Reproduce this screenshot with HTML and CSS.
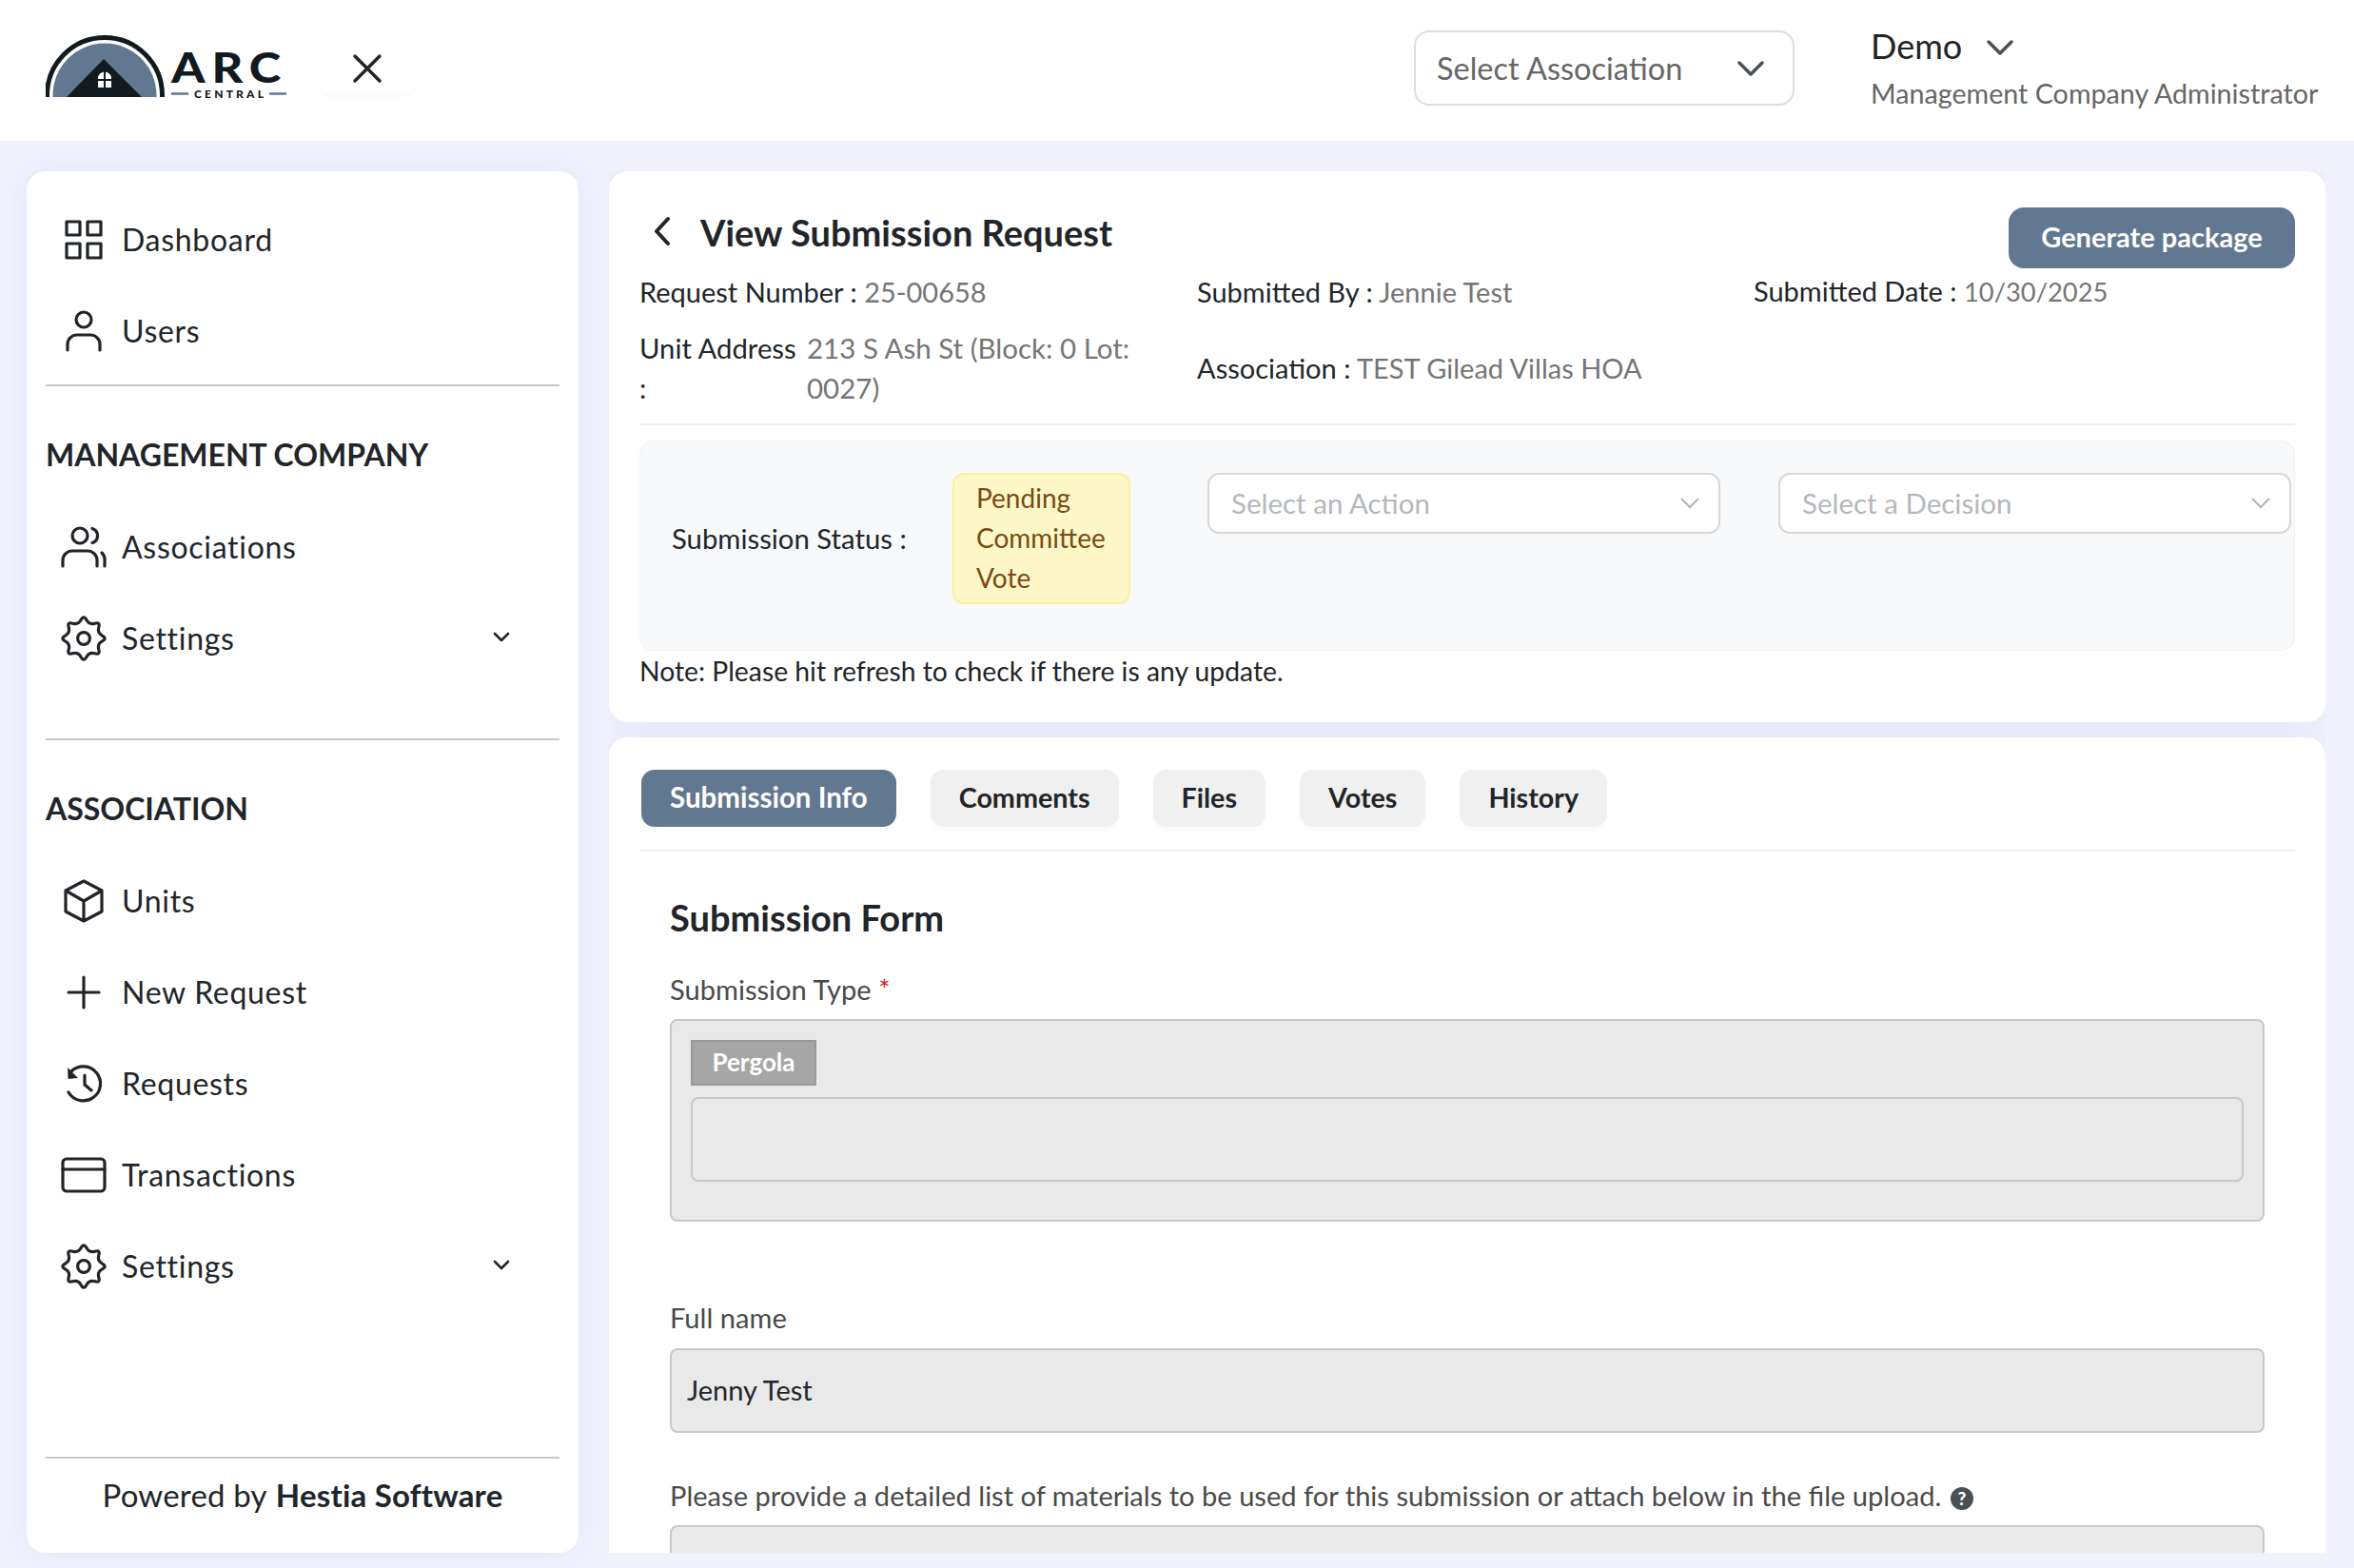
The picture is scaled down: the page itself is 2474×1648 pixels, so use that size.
FILE: index.html
```html
<!DOCTYPE html>
<html lang="en">
<head>
  <meta charset="UTF-8">
  <title>View Submission Request</title>
  <link rel="stylesheet" href="styles.css">
</head>
<body>
  <!-- Top bar -->
  <header class="topbar">
    <svg class="logo" width="260" height="76" viewBox="48 32 260 76">
      <defs><clipPath id="dome"><rect x="40" y="30" width="140" height="72"/></clipPath></defs>
      <g clip-path="url(#dome)">
        <circle cx="110" cy="100" r="60.5" fill="none" stroke="#111a1e" stroke-width="5"/>
        <circle cx="110" cy="100" r="54.5" fill="#627891"/>
        <path d="M109 62 L150 103 L69 103Z" fill="#111a1e"/>
      </g>
      <path d="M103 92V82a7 6.5 0 0 1 14 0V92Z" fill="#fff"/>
      <path d="M110 74V93M102 84H118" stroke="#111a1e" stroke-width="2"/>
      <text class="logo-arc" x="180" y="87" textLength="122" lengthAdjust="spacingAndGlyphs">ARC</text>
      <path d="M180 98.500H198M283 98.500H301" stroke="#627891" stroke-width="2.500"/>
      <text class="logo-central" x="204" y="103" textLength="73" lengthAdjust="spacing">CENTRAL</text>
    </svg>
    <button class="close-btn" type="button" aria-label="Close menu">
      <svg width="32" height="32" viewBox="0 0 32 32"><path d="M3 3L29 29M29 3L3 29" fill="none" stroke="#212529" stroke-width="3.500" stroke-linecap="round"/></svg>
    </button>
    <div class="assoc-select">
      <span>Select Association</span>
      <svg width="28" height="18" viewBox="0 0 28 18"><path d="M2 3L14 15L26 3" fill="none" stroke="#495057" stroke-width="3.500" stroke-linecap="round" stroke-linejoin="round"/></svg>
    </div>
    <div class="user">
      <div class="user-name">
        <span>Demo</span>
        <svg class="user-caret" width="28" height="18" viewBox="0 0 28 18"><path d="M2 3L14 15L26 3" fill="none" stroke="#495057" stroke-width="3.500" stroke-linecap="round" stroke-linejoin="round"/></svg>
      </div>
      <div class="user-role">Management Company Administrator</div>
    </div>
  </header>

  <div class="layout">
    <!-- Sidebar -->
    <aside class="sidebar">
      <a class="nav-item">
        <svg class="nav-icon" viewBox="0 0 24 24"><path d="M3 2.500H10V9.500H3ZM14 2.500H21V9.500H14ZM3 14H10V21.500H3ZM14 14H21V21.500H14Z"/></svg>
        Dashboard
      </a>
      <a class="nav-item">
        <svg class="nav-icon" viewBox="0 0 24 24"><circle cx="12" cy="6" r="4"/><path d="M3.500 22V19a5 5 0 0 1 5-5h7a5 5 0 0 1 5 5v3"/></svg>
        Users
      </a>
      <hr class="side-rule">
      <h2 class="side-title first">MANAGEMENT COMPANY</h2>
      <a class="nav-item">
        <svg class="nav-icon" viewBox="0 0 24 24"><circle cx="10" cy="6" r="4"/><path d="M16.500 2.200a4 4 0 0 1 0 7.600M1 22V19a5 5 0 0 1 5-5h8a5 5 0 0 1 5 5v3M21.500 15a5 5 0 0 1 1.500 4v3"/></svg>
        Associations
      </a>
      <a class="nav-item">
        <svg class="nav-icon" viewBox="0 0 24 24"><path d="M10.545 2.290Q12 -.4 13.455 2.290Q14.910 4.980 17.840 4.105Q20.770 3.230 19.895 6.160Q19.020 9.090 21.710 10.545Q24.400 12 21.710 13.455Q19.020 14.910 19.895 17.840Q20.770 20.770 17.840 19.895Q14.910 19.020 13.455 21.710Q12 24.400 10.545 21.710Q9.090 19.020 6.160 19.895Q3.230 20.770 4.105 17.840Q4.980 14.910 2.290 13.455Q-.4 12 2.290 10.545Q4.980 9.090 4.105 6.160Q3.230 3.230 6.160 4.105Q9.090 4.980 10.545 2.290Z"/><circle cx="12" cy="12" r="3.200"/></svg>
        Settings
        <svg class="nav-caret" viewBox="0 0 18 12"><path d="M2 2L9 9L16 2"/></svg>
      </a>
      <hr class="side-rule second">
      <h2 class="side-title">ASSOCIATION</h2>
      <a class="nav-item">
        <svg class="nav-icon" viewBox="0 0 24 24"><path d="M12 1.500L21.500 6.500V17.500L12 22.500L2.500 17.500V6.500ZM2.500 6.500L12 12L21.500 6.500M12 12V22.500"/></svg>
        Units
      </a>
      <a class="nav-item">
        <svg class="nav-icon" viewBox="0 0 24 24"><path d="M12 4V20M4 12H20"/></svg>
        New Request
      </a>
      <a class="nav-item">
        <svg class="nav-icon" viewBox="0 0 24 24"><path d="M5.500 5.500A9 9 0 1 1 4 16.500M12.500 7.500V12.500L16 15.500"/><path class="solid" d="M3.500 3.500L3.800 9.500L9 9Z"/></svg>
        Requests
      </a>
      <a class="nav-item">
        <svg class="nav-icon" viewBox="0 0 24 24"><rect x="1" y="3.500" width="22" height="17" rx="2"/><path d="M1 9H23"/></svg>
        Transactions
      </a>
      <a class="nav-item">
        <svg class="nav-icon" viewBox="0 0 24 24"><path d="M10.545 2.290Q12 -.4 13.455 2.290Q14.910 4.980 17.840 4.105Q20.770 3.230 19.895 6.160Q19.020 9.090 21.710 10.545Q24.400 12 21.710 13.455Q19.020 14.910 19.895 17.840Q20.770 20.770 17.840 19.895Q14.910 19.020 13.455 21.710Q12 24.400 10.545 21.710Q9.090 19.020 6.160 19.895Q3.230 20.770 4.105 17.840Q4.980 14.910 2.290 13.455Q-.4 12 2.290 10.545Q4.980 9.090 4.105 6.160Q3.230 3.230 6.160 4.105Q9.090 4.980 10.545 2.290Z"/><circle cx="12" cy="12" r="3.200"/></svg>
        Settings
        <svg class="nav-caret" viewBox="0 0 18 12"><path d="M2 2L9 9L16 2"/></svg>
      </a>
      <div class="side-footer">Powered by <b>Hestia Software</b></div>
    </aside>

    <main class="content">
      <!-- Request summary -->
      <section class="card summary">
        <div class="title-row">
          <h1 class="page-title">
            <svg class="back-icon" width="20" height="32" viewBox="0 0 20 32"><path d="M16 3L4 16L16 29" fill="none" stroke="#212529" stroke-width="4" stroke-linecap="round" stroke-linejoin="round"/></svg>
            View Submission Request
          </h1>
          <button class="btn-package" type="button">Generate package</button>
        </div>
        <div class="info-grid">
          <div>Request Number : <span class="val">25-00658</span></div>
          <div>Submitted By : <span class="val">Jennie Test</span></div>
          <div class="date">Submitted Date : <span class="val">10/30/2025</span></div>
          <div class="unit">
            <div class="unit-label">Unit Address :</div>
            <div class="val unit-val">213 S Ash St (Block: 0 Lot: 0027)</div>
          </div>
          <div>Association : <span class="val">TEST Gilead Villas HOA</span></div>
        </div>
        <div class="status-panel">
          <div class="status-label">Submission Status :</div>
          <div class="status-badge">Pending Committee Vote</div>
          <div class="fake-select action">
            <span>Select an Action</span>
            <svg width="20" height="12" viewBox="0 0 20 12"><path d="M1 1L10 10L19 1" fill="none" stroke="#adb5bd" stroke-width="2"/></svg>
          </div>
          <div class="fake-select decision">
            <span>Select a Decision</span>
            <svg width="20" height="12" viewBox="0 0 20 12"><path d="M1 1L10 10L19 1" fill="none" stroke="#adb5bd" stroke-width="2"/></svg>
          </div>
        </div>
        <p class="note">Note: Please hit refresh to check if there is any update.</p>
      </section>

      <!-- Tabs and form -->
      <section class="card details">
        <div class="tabs">
          <button class="tab active" type="button">Submission Info</button>
          <button class="tab" type="button">Comments</button>
          <button class="tab" type="button">Files</button>
          <button class="tab" type="button">Votes</button>
          <button class="tab" type="button">History</button>
        </div>
        <form class="form">
          <h2 class="form-title">Submission Form</h2>
          <label class="field-label">Submission Type <span class="req">*</span></label>
          <div class="multi-box">
            <span class="tag">Pergola</span>
            <div class="multi-input"></div>
          </div>
          <label class="field-label full-name">Full name</label>
          <div class="text-box">Jenny Test</div>
          <label class="field-label materials">
            Please provide a detailed list of materials to be used for this submission or attach below in the file upload.
            <span class="help">?</span>
          </label>
          <div class="text-box"></div>
        </form>
      </section>
    </main>
  </div>
</body>
</html>
```

FILE: styles.css
```css
* {
  margin: 0;
  padding: 0;
  box-sizing: border-box;
}

body {
  width: 2474px;
  height: 1648px;
  overflow: hidden;
  background-color: #f0f1fd;
  color: #212529;
  font-family: Lato, "Open Sans", sans-serif;
  font-size: 28px;
  line-height: 42px;
}

button {
  border: none;
  font-family: inherit;
}

/* Top bar */
.topbar {
  height: 148px;
  background-color: #fff;
  display: flex;
  align-items: center;
  padding-left: 48px;
}

.logo {
  flex: none;
  margin-top: -8px;
}

.logo-arc {
  font-family: Lato, sans-serif;
  font-weight: 900;
  font-size: 44px;
  letter-spacing: 6px;
  fill: #111a1e;
}

.logo-central {
  font-family: Lato, sans-serif;
  font-weight: 900;
  font-size: 12px;
  fill: #111a1e;
}

.close-btn {
  width: 108px;
  height: 64px;
  margin: -14px 0 0 24px;
  padding-top: 10px;
  background-color: #fff;
  border-radius: 0 0 16px 16px;
  box-shadow: 0 3px 3px rgba(0, 0, 0, 0.02);
  display: flex;
  align-items: center;
  justify-content: center;
}

.assoc-select {
  width: 400px;
  height: 79px;
  margin-left: auto;
  margin-bottom: 5px;
  padding: 0 30px 0 22px;
  border: 2px solid #dcdcdc;
  border-radius: 16px;
  display: flex;
  align-items: center;
  justify-content: space-between;
  font-size: 32.500px;
  color: #666;
}

.user {
  width: 508px;
  margin-left: 80px;
}

.user-name {
  display: flex;
  align-items: center;
  gap: 26px;
  font-size: 36px;
  line-height: 44px;
  margin-bottom: 4px;
}

.user-caret {
  margin-top: 4px;
}

.user-role {
  color: #666;
  font-size: 28.700px;
  line-height: 48px;
}

/* Page layout */
.layout {
  height: 1500px;
  padding: 32px 30px 16px 28px;
  display: flex;
  gap: 32px;
}

.sidebar {
  width: 580px;
  flex: none;
  padding: 24px 20px 0;
  background-color: #fff;
  border-radius: 20px;
  box-shadow: 0 0 32px rgba(60, 60, 160, 0.06);
  display: flex;
  flex-direction: column;
}

.nav-item {
  height: 96px;
  flex: none;
  display: flex;
  align-items: center;
  position: relative;
  padding-left: 80px;
  font-size: 32px;
  letter-spacing: 0.7px;
}

.nav-icon {
  position: absolute;
  left: 16px;
  top: 24px;
  width: 48px;
  height: 48px;
  fill: none;
  stroke: #212529;
  stroke-width: 1.600;
  stroke-linecap: round;
  stroke-linejoin: round;
}

.nav-icon .solid {
  fill: #212529;
  stroke: none;
}

.nav-caret {
  position: absolute;
  right: 52px;
  top: 41px;
  width: 18px;
  height: 12px;
  fill: none;
  stroke: #212529;
  stroke-width: 2.600;
  stroke-linecap: round;
  stroke-linejoin: round;
}

.side-rule {
  border: none;
  border-top: 2px solid #c8c8c8;
  margin-top: 8px;
  flex: none;
}

.side-rule.second {
  margin-top: 57px;
}

.side-title {
  font-size: 32px;
  font-weight: 700;
  line-height: 44px;
  margin-top: 50px;
  margin-bottom: 27px;
}

.side-footer {
  margin-top: auto;
  border-top: 2px solid #c8c8c8;
  height: 101px;
  display: flex;
  justify-content: center;
  gap: 9px;
  padding-top: 17px;
  font-size: 33px;
  letter-spacing: 0.2px;
}

/* Main column */
.content {
  width: 1804px;
  flex: none;
  display: flex;
  flex-direction: column;
  gap: 16px;
  overflow: hidden;
}

.card {
  background-color: #fff;
  border-radius: 20px;
  box-shadow: 0 0 32px rgba(60, 60, 160, 0.05);
}

.summary {
  height: 579px;
  padding: 38px 32px 0;
}

.title-row {
  height: 67px;
  display: flex;
  justify-content: space-between;
  align-items: flex-start;
}

.page-title {
  display: flex;
  align-items: center;
  gap: 30px;
  margin-left: 14px;
  height: 52px;
  font-size: 38px;
  font-weight: 700;
}

.back-icon {
  margin-top: -3px;
}

.btn-package {
  width: 301px;
  height: 64px;
  padding-bottom: 3px;
  background-color: #627891;
  color: #fff;
  border-radius: 16px;
  font-size: 29px;
  font-weight: 700;
}

.info-grid {
  display: grid;
  grid-template-columns: 586px 585px 1fr;
  row-gap: 17px;
  align-items: center;
  padding-bottom: 16px;
  border-bottom: 2px solid #eeeeee;
  font-size: 29px;
}

.date .val {
  font-size: 27.300px;
}

.val {
  color: #757575;
}

.unit {
  display: flex;
}

.unit-label {
  width: 170px;
  margin-right: 6px;
  flex: none;
  font-size: 29.300px;
}

.unit-val {
  width: 345px;
  font-size: 29.500px;
}

.status-panel {
  height: 221px;
  margin-top: 16px;
  padding: 33px 3px 0 33px;
  background-color: #f8f9fb;
  border: 1px solid #f1f2f4;
  border-radius: 14px;
  display: flex;
  align-items: flex-start;
}

.status-label {
  width: 295px;
  flex: none;
  height: 138px;
  display: flex;
  align-items: center;
  font-size: 29.300px;
}

.status-badge {
  width: 187px;
  height: 138px;
  flex: none;
  padding: 3px 23px;
  background-color: #fef8c8;
  border: 2px solid #fdeea0;
  border-radius: 12px;
  color: #7a4a14;
}

.fake-select {
  width: 539px;
  height: 64px;
  flex: none;
  padding: 0 20px 0 23px;
  background-color: #fff;
  border: 2px solid #d8d8d8;
  border-radius: 12px;
  display: flex;
  align-items: center;
  justify-content: space-between;
  color: #b4b8bc;
  font-size: 29.500px;
}

.fake-select.action {
  margin-left: 81px;
}

.fake-select.decision {
  margin-left: 61px;
}

.note {
  height: 42px;
  font-size: 28.300px;
}

.details {
  flex: 1;
  min-height: 0;
  overflow: hidden;
  padding: 34px 32px 0;
  border-radius: 20px 20px 0 0;
}

.tabs {
  display: flex;
  gap: 36px;
  padding: 0 0 24px 2px;
  border-bottom: 2px solid #f1f1f1;
}

.tab {
  height: 60px;
  padding: 0 30px 3px;
  background-color: #f0f0f0;
  border-radius: 14px;
  box-shadow: 0 5px 4px rgba(0, 0, 0, 0.015);
  font-size: 28.700px;
  font-weight: 700;
  color: #212529;
}

.tab.active {
  background-color: #627891;
  color: #fff;
  font-size: 29.500px;
}

/* Form */
.form {
  padding: 0 32px;
}

.form-title {
  font-size: 38px;
  font-weight: 700;
  line-height: 44px;
  margin-top: 47px;
}

.field-label {
  display: block;
  margin-top: 35px;
  margin-bottom: 12px;
  line-height: 38px;
  color: #4a4a4a;
  font-size: 29.100px;
}

.field-label.full-name {
  margin-top: 82px;
  margin-bottom: 13px;
}

.field-label.materials {
  margin-top: 47px;
  margin-bottom: 12px;
}

.req {
  color: #e02020;
}

.help {
  display: inline-block;
  width: 24px;
  height: 24px;
  margin-left: 2px;
  border-radius: 50%;
  background-color: #495057;
  color: #fff;
  font-size: 19px;
  font-weight: 900;
  line-height: 24px;
  text-align: center;
  vertical-align: 1px;
}

.multi-box {
  height: 213px;
  padding: 20px;
  background-color: #e9e9e9;
  border: 2px solid #c8c8c8;
  border-radius: 8px;
}

.tag {
  display: block;
  width: 132px;
  height: 48px;
  background-color: #a6a6a6;
  border: 2px solid #999;
  color: #fff;
  font-size: 26px;
  font-weight: 700;
  line-height: 42px;
  text-align: center;
}

.multi-input {
  height: 89px;
  margin-top: 12px;
  border: 2px solid #c8c8c8;
  border-radius: 8px;
}

.text-box {
  height: 89px;
  padding: 0 16px;
  background-color: #e9e9e9;
  border: 2px solid #c8c8c8;
  border-radius: 8px;
  font-size: 29px;
  line-height: 83px;
}
```
